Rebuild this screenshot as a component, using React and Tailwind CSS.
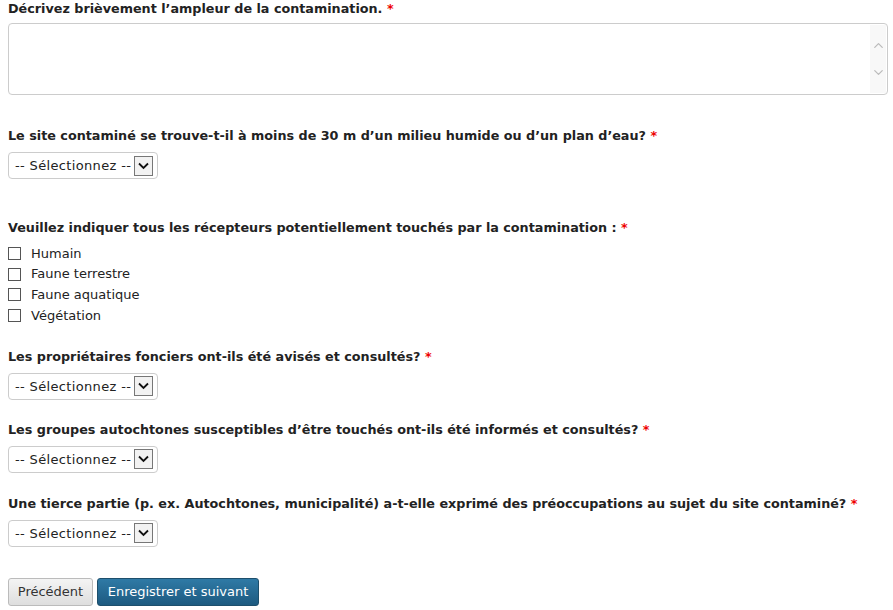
import { ChevronUp, ChevronDown } from "lucide-react";

const FONT = { fontFamily: '"DejaVu Sans", Verdana, sans-serif' };

function Label({ children }) {
  return (
    <div className="text-[12.75px] font-bold leading-[16px] text-[#222]">
      {children} <span className="text-[#e00]">*</span>
    </div>
  );
}

function FakeSelect() {
  return (
    <div className="mt-[8px] flex h-[27px] w-[150px] items-center justify-between rounded-[4px] border border-[#ccc] bg-white pl-[6px] pr-[4px]">
      <span className="text-[13px] tracking-[0.35px] text-[#222]">-- Sélectionnez --</span>
      <span className="flex h-[20px] w-[19px] items-center justify-center border border-[#777] bg-[#f2f2f2]">
        <svg width="11" height="8" viewBox="0 0 11 8">
          <path d="M1 1.5 L5.5 6 L10 1.5" fill="none" stroke="#111" strokeWidth="1.8" />
        </svg>
      </span>
    </div>
  );
}

const receptors = ["Humain", "Faune terrestre", "Faune aquatique", "Végétation"];

export default function App() {
  return (
    <div className="min-h-[610px] bg-white px-[8px] pt-[1px]" style={FONT}>
      <Label>Décrivez brièvement l’ampleur de la contamination.</Label>
      <div className="relative mt-[6px] h-[72px] w-[880px] rounded-[4px] border border-[#ccc] bg-white">
        <div className="absolute right-[1px] top-[1px] bottom-[1px] flex w-[16px] flex-col items-center justify-center gap-[12px] bg-[#f8f8f8]">
          <ChevronUp size={15} strokeWidth={2} className="text-[#bbb]" />
          <ChevronDown size={15} strokeWidth={2} className="text-[#bbb]" />
        </div>
      </div>

      <div className="mt-[33px]">
        <Label>Le site contaminé se trouve-t-il à moins de 30 m d’un milieu humide ou d’un plan d’eau?</Label>
        <FakeSelect />
      </div>

      <div className="mt-[41px]">
        <Label>Veuillez indiquer tous les récepteurs potentiellement touchés par la contamination :</Label>
        <div className="mt-[7px] flex flex-col">
          {receptors.map((r) => (
            <label key={r} className="flex h-[20.7px] items-center gap-[10px] text-[13px] text-[#222]">
              <span className="h-[13px] w-[13px] border border-[#555] bg-white" />
              {r}
            </label>
          ))}
        </div>
      </div>

      <div className="mt-[23px]">
        <Label>Les propriétaires fonciers ont-ils été avisés et consultés?</Label>
        <FakeSelect />
      </div>

      <div className="mt-[22px]">
        <Label>Les groupes autochtones susceptibles d’être touchés ont-ils été informés et consultés?</Label>
        <FakeSelect />
      </div>

      <div className="mt-[23px]">
        <Label>Une tierce partie (p. ex. Autochtones, municipalité) a-t-elle exprimé des préoccupations au sujet du site contaminé?</Label>
        <FakeSelect />
      </div>

      <div className="mt-[31px] flex gap-[4px]">
        <button className="h-[28px] w-[85px] rounded-[3px] border border-[#bbb] bg-gradient-to-b from-[#f4f4f4] to-[#dedede] text-[13px] text-[#333]">
          Précédent
        </button>
        <button className="h-[28px] w-[162px] rounded-[3px] border border-[#1d4f6c] bg-gradient-to-b from-[#2f7aa6] to-[#1d5a80] text-[13px] text-white">
          Enregistrer et suivant
        </button>
      </div>
    </div>
  );
}
